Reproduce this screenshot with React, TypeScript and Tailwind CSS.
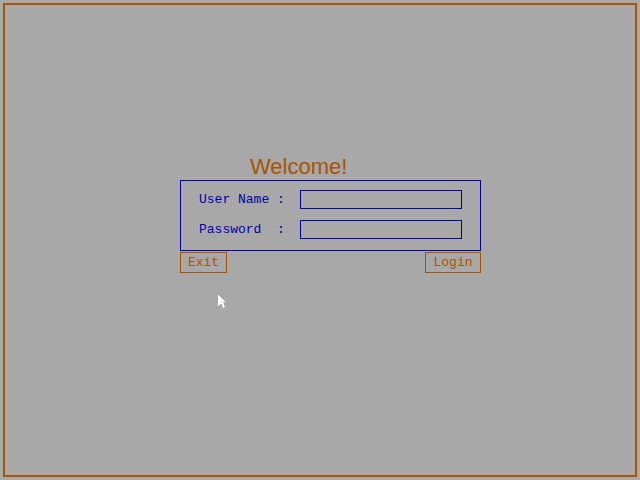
export default function App() {
  return (
    <div className="relative w-[640px] h-[480px] bg-[#a8a8a8] p-[3px]">
      <div className="h-full w-full border-2 border-[#a85400] pl-[175px] pt-[150px]">
        <div className="w-[301px]">
          <div className="pl-[70px] h-[24px] text-[22px] leading-[24px] text-[#a85400] font-['Liberation_Sans',Arial,sans-serif]">
            Welcome!
          </div>
          <div className="mt-px border border-[#0000a8] pl-[18px] pr-[18px] pt-[9px] pb-[11px] flex flex-col gap-[11px] font-['Liberation_Mono',monospace] text-[13px] text-[#0000a8]">
            <div className="flex items-center h-[19px]">
              <span className="w-[101px] whitespace-pre">User Name :</span>
              <div className="w-[162px] h-[19px] border border-[#0000a8]" />
            </div>
            <div className="flex items-center h-[19px]">
              <span className="w-[101px] whitespace-pre">Password  :</span>
              <div className="w-[162px] h-[19px] border border-[#0000a8]" />
            </div>
          </div>
          <div className="mt-px flex justify-between font-['Liberation_Mono',monospace] text-[13px] text-[#a85400]">
            <button className="w-[47px] h-[21px] border border-[#a85400] flex items-center justify-center leading-none">
              Exit
            </button>
            <button className="w-[56px] h-[21px] border border-[#a85400] flex items-center justify-center leading-none">
              Login
            </button>
          </div>
        </div>
      </div>
      <svg className="absolute left-[218px] top-[295px]" width="10" height="15" viewBox="0 0 10 15" shapeRendering="crispEdges">
        <polygon points="0,0 0,11 3,8 5,13 7,12 5,7 8,7" fill="#ffffff" />
      </svg>
    </div>
  );
}
